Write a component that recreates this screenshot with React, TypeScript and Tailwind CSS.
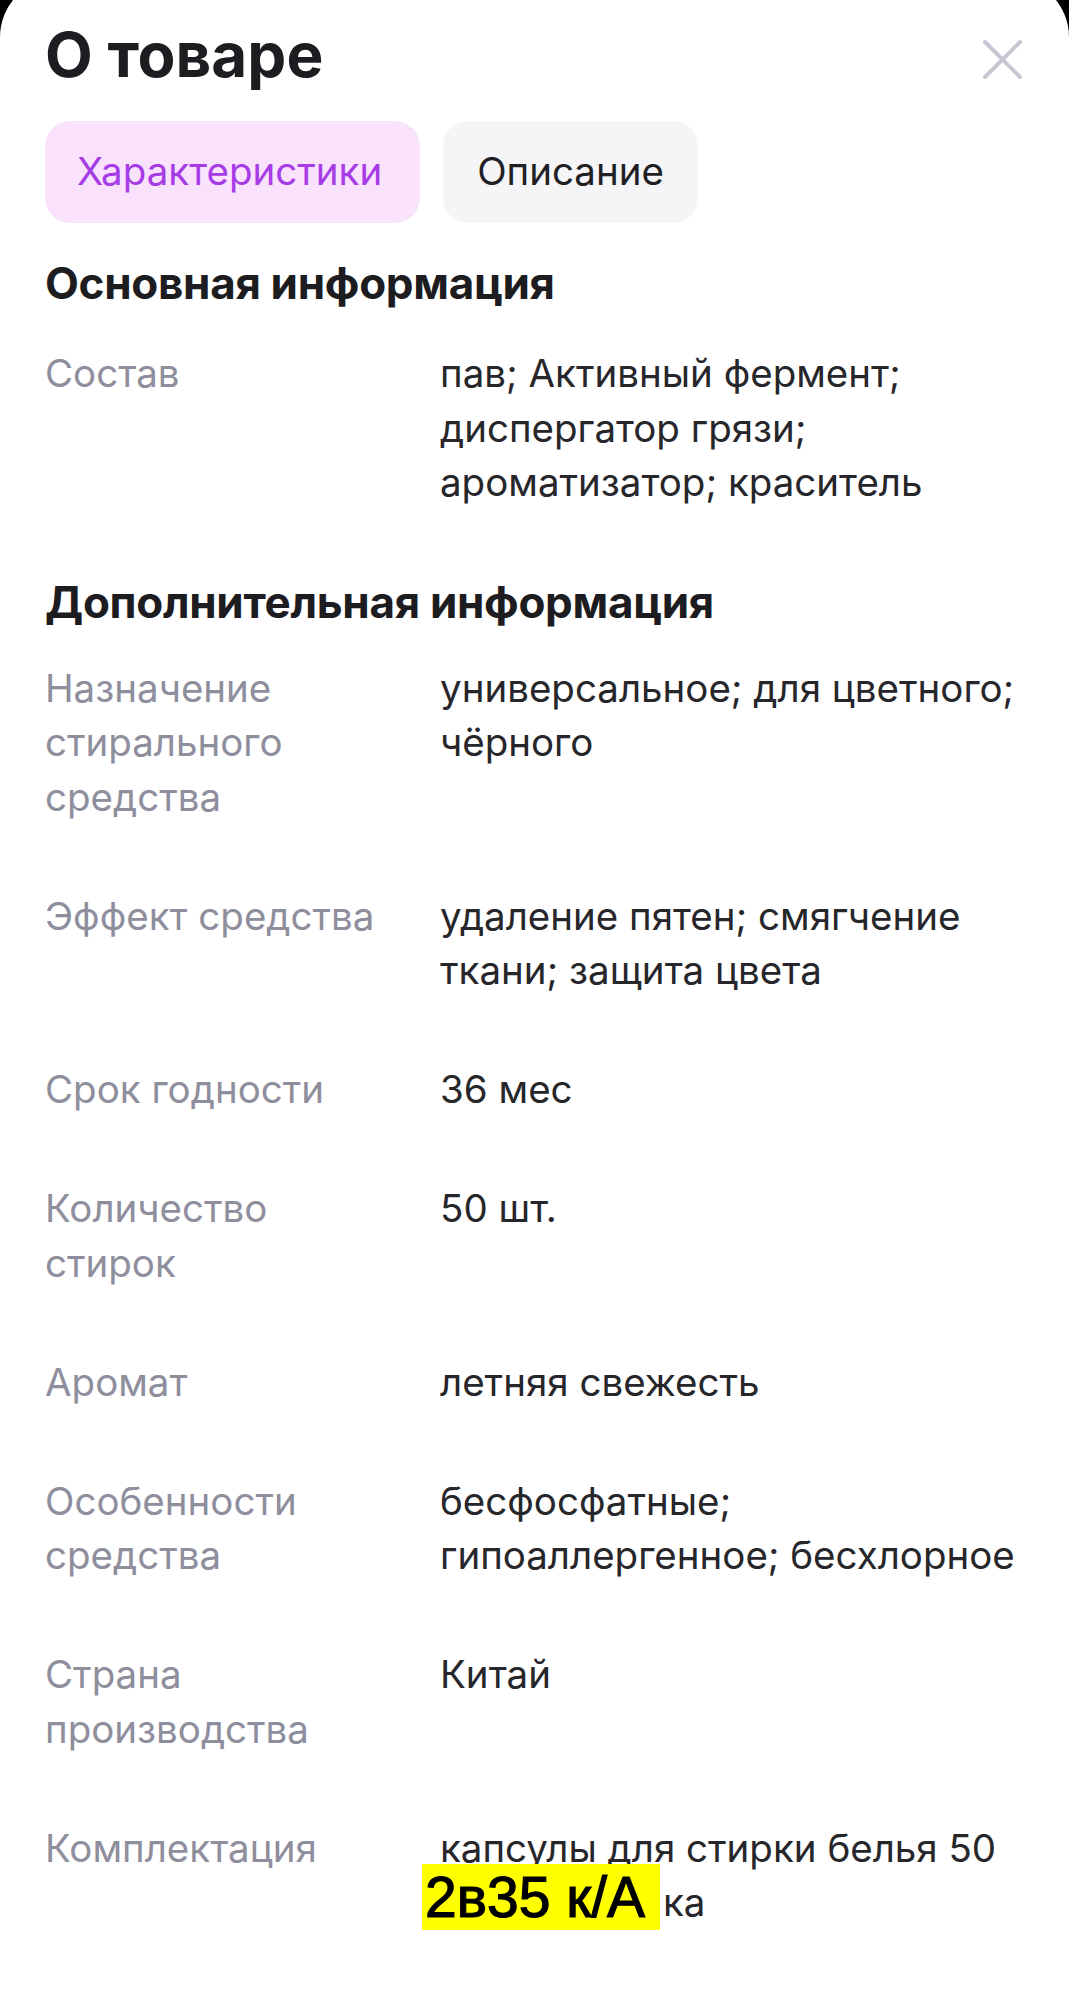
type Row = { label: string[]; value: string[] };

const mainRows: Row[] = [
  {
    label: ["Состав"],
    value: ["пав; Активный фермент;", "диспергатор грязи;", "ароматизатор; краситель"],
  },
];

const extraRows: Row[] = [
  {
    label: ["Назначение", "стирального", "средства"],
    value: ["универсальное; для цветного;", "чёрного"],
  },
  { label: ["Эффект средства"], value: ["удаление пятен; смягчение", "ткани; защита цвета"] },
  { label: ["Срок годности"], value: ["36 мес"] },
  { label: ["Количество", "стирок"], value: ["50 шт."] },
  { label: ["Аромат"], value: ["летняя свежесть"] },
  { label: ["Особенности", "средства"], value: ["бесфосфатные;", "гипоаллергенное; бесхлорное"] },
  { label: ["Страна", "производства"], value: ["Китай"] },
];

function SpecRow({ row }: { row: Row }) {
  return (
    <div className="grid grid-cols-[395px_1fr] text-[38.5px] leading-[54.5px]">
      <div className="flex flex-col text-[#8e8e9d]">
        {row.label.map((l) => (
          <span key={l}>{l}</span>
        ))}
      </div>
      <div className="flex flex-col text-[#26262b]">
        {row.value.map((v) => (
          <span key={v} className="whitespace-nowrap">
            {v}
          </span>
        ))}
      </div>
    </div>
  );
}

export default function App() {
  return (
    <div className="flex min-h-[2000px] flex-col bg-black font-['Inter',sans-serif]">
      <div className="-mt-[22px] flex min-h-[2022px] flex-col rounded-t-[59px] bg-white pl-[45px] pr-[46px] pt-[47px]">
        {/* шапка */}
        <div className="flex items-center justify-between">
          <h1 className="text-[62px] font-bold leading-[60px] text-[#1c1c21]">О товаре</h1>
          <svg width="41" height="41" viewBox="0 0 41 41" className="mt-2">
            <path d="M3 3 L38 38 M38 3 L3 38" stroke="#c6c6d4" strokeWidth="4" strokeLinecap="round" />
          </svg>
        </div>

        {/* вкладки */}
        <div className="mt-[36px] flex gap-[23px]">
          <button className="flex h-[102px] items-center rounded-[25px] bg-[#fae2fd] pl-[32px] pr-[38px] text-[38.5px] text-[#a63ce6]">
            Характеристики
          </button>
          <button className="flex h-[102px] items-center rounded-[25px] bg-[#f5f5f8] px-[34px] text-[38.5px] text-[#1f1f24]">
            Описание
          </button>
        </div>

        <h2 className="mt-[33px] text-[44px] font-bold leading-[54px] tracking-[-0.3px] text-[#1c1c21]">
          Основная информация
        </h2>
        <div className="mt-[36px] flex flex-col gap-[64.5px]">
          {mainRows.map((r) => (
            <SpecRow key={r.label[0]} row={r} />
          ))}
        </div>

        <h2 className="mt-[65px] text-[44px] font-bold leading-[54px] tracking-[-0.3px] text-[#1c1c21]">
          Дополнительная информация
        </h2>
        <div className="mt-[32px] flex flex-col gap-[64.5px]">
          {extraRows.map((r) => (
            <SpecRow key={r.label[0]} row={r} />
          ))}

          {/* комплектация */}
          <div className="grid grid-cols-[395px_1fr] text-[38.5px] leading-[54.5px]">
            <span className="text-[#8e8e9d]">Комплектация</span>
            <div className="flex flex-col text-[#26262b]">
              <span className="whitespace-nowrap">капсулы для стирки белья 50</span>
              <div className="flex h-[54.5px] items-start">
                <span className="-ml-[18px] -mt-[11px] flex h-[66px] w-[238px] items-center bg-[#ffff00] pl-[3px] font-['Liberation_Sans',sans-serif] text-[57px] leading-none text-black [-webkit-text-stroke:1.2px_black]">
                  2в35 к/А
                </span>
                <span className="ml-[3px]">ка</span>
              </div>
            </div>
          </div>
        </div>
      </div>
    </div>
  );
}
